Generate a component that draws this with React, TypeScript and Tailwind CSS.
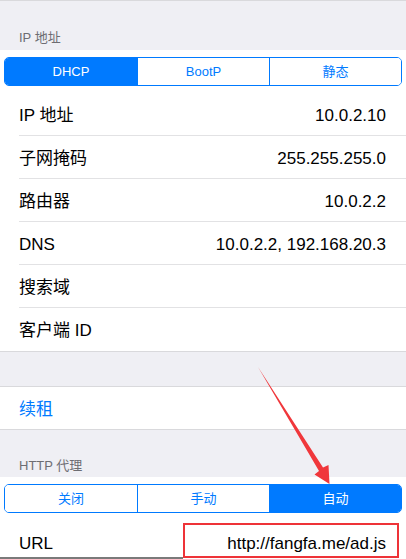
import React from "react";

const font = { fontFamily: '"Liberation Sans", "Noto Sans CJK SC", sans-serif' };

function Segmented({ items, active }: { items: string[]; active: number }) {
  return (
    <div className="px-[4px] py-[7px] bg-white">
      <div className="grid grid-cols-3 h-[29px] border border-[#007aff] rounded-[5px] overflow-hidden">
        {items.map((t, i) => (
          <div
            key={t}
            className={
              "flex items-center justify-center text-[13px] pt-[1px] " +
              (i > 0 ? "border-l border-[#007aff] " : "") +
              (i === active ? "bg-[#007aff] text-white" : "bg-white text-[#007aff]")
            }
          >
            {t}
          </div>
        ))}
      </div>
    </div>
  );
}

function Row({ label, value, last }: { label: string; value?: string; last?: boolean }) {
  return (
    <div className="pl-[19px] bg-white">
      <div
        className={
          "h-[43px] flex items-center justify-between pt-[3px] pr-[20px] text-[17px] text-black " +
          (last ? "" : "border-b border-[#e2e2e4]")
        }
      >
        <span>{label}</span>
        {value && <span>{value}</span>}
      </div>
    </div>
  );
}

export default function App() {
  return (
    <div className="relative w-[406px] h-[559px] overflow-hidden bg-[#efeff4]" style={font}>
      <div className="h-px bg-[#d9d9dc]" />
      <div className="h-[49px] flex items-end pb-[4px] px-[19px] text-[13px] leading-[16px] text-[#6d6d72]">
        IP 地址
      </div>
      <div className="bg-white border-b border-[#d9d9dc]">
        <Segmented items={["DHCP", "BootP", "静态"]} active={0} />
        <Row label="IP 地址" value="10.0.2.10" />
        <Row label="子网掩码" value="255.255.255.0" />
        <Row label="路由器" value="10.0.2.2" />
        <Row label="DNS" value="10.0.2.2, 192.168.20.3" />
        <Row label="搜索域" />
        <Row label="客户端 ID" last />
      </div>
      <div className="h-[34px]" />
      <div className="bg-white border-t border-b border-[#d9d9dc] h-[44px] flex items-center pt-[3px] pl-[19px] text-[17px] text-[#007aff]">
        续租
      </div>
      <div className="h-[47px] flex items-end pb-[3px] px-[19px] text-[13px] leading-[16px] text-[#6d6d72]">
        HTTP 代理
      </div>
      <div className="bg-white">
        <Segmented items={["关闭", "手动", "自动"]} active={2} />
        <div className="h-[43px] flex items-center justify-between pt-[4px] pl-[19px] pr-[20px] text-[17px] text-black">
          <span>URL</span>
          <span>http://fangfa.me/ad.js</span>
        </div>
      </div>

      {/* bottom edge line and annotation overlays */}
      <div className="absolute left-0 top-[557px] w-[183px] h-[2px] bg-[#7a7a7a]" />
      <div className="absolute left-[183px] top-[523px] w-[216px] h-[35px] border-2 border-[#ee3338]" />
      <svg className="absolute left-0 top-0" width="406" height="559" viewBox="0 0 406 559">
        <polygon
          points="258,367 323,467.5 328.5,465 329.5,484 314.5,474.5 319,471"
          fill="#f0373b"
        />
      </svg>
    </div>
  );
}
